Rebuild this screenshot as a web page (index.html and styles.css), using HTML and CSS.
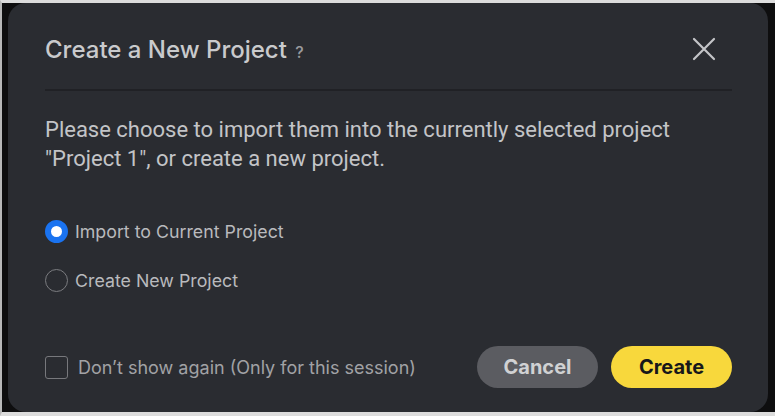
FILE: index.html
```html
<!DOCTYPE html>
<html>
<head>
<meta charset="utf-8">
<link rel="stylesheet" href="styles.css">
</head>
<body>
<div class="screen">
  <div class="dialog">
    <div class="header">
      <h1 class="title">Create a New Project <span class="help">?</span></h1>
      <button class="close" aria-label="Close">
        <svg width="24" height="24" viewBox="0 0 24 24"><path d="M2 2 L22 22 M22 2 L2 22" stroke="#c4c5c8" stroke-width="2.2" stroke-linecap="round" fill="none"/></svg>
      </button>
    </div>
    <div class="divider"></div>
    <p class="desc">Please choose to import them into the currently selected project<br>"Project 1", or create a new project.</p>
    <div class="options">
      <label class="option"><span class="radio checked"></span><span class="opt-text">Import to Current Project</span></label>
      <label class="option"><span class="radio"></span><span class="opt-text">Create New Project</span></label>
    </div>
    <div class="footer">
      <label class="check"><span class="box"></span><span class="check-text">Don’t show again (Only for this session)</span></label>
      <div class="buttons">
        <button class="btn cancel">Cancel</button>
        <button class="btn create">Create</button>
      </div>
    </div>
  </div>
</div>
</body>
</html>
```
FILE: styles.css
```css
html, body { margin: 0; padding: 0; }
body { background: #0f0f10; width: 775px; height: 416px; overflow: hidden; }
.screen {
  box-sizing: border-box;
  width: 775px; height: 416px;
  border-top: 3px solid #dcdcdc;
  border-bottom: 4px solid #dcdcdc;
  border-left: 2px solid #b8b8b8;
  background: #0e0e0f;
  padding: 0 7px 0 6px;
}
.dialog {
  box-sizing: border-box;
  height: 100%;
  background: #2a2c31;
  border-radius: 18px;
  padding: 30px 36px 0 37px;
  display: flex;
  flex-direction: column;
  font-family: "Roboto", "Liberation Sans", sans-serif;
}
.header { display: flex; justify-content: space-between; align-items: center; height: 32px; }
.title {
  margin: 0;
  font-family: "Inter", "Liberation Sans", sans-serif;
  font-weight: 500;
  font-size: 24px;
  color: #c9cacc;
}
.help { font-size: 16px; color: #9a9b9e; margin-left: 2px; font-weight: 500; }
.close { background: none; border: 0; padding: 0; width: 24px; height: 24px; margin-right: 16px; display: flex; }
.divider { height: 2px; background: #202125; margin-top: 24px; }
.desc {
  margin: 24px 0 0 0;
  font-size: 22px;
  line-height: 29px;
  color: #c3c4c7;
}
.options { margin-top: 47px; display: flex; flex-direction: column; gap: 26px; }
.option { display: flex; align-items: center; gap: 7px; height: 23px; }
.radio {
  box-sizing: border-box;
  width: 23px; height: 23px; border-radius: 50%;
  border: 1.5px solid #7b7c80;
}
.radio.checked { border: 6px solid #1a73f0; background: #ffffff; }
.opt-text { font-family: "Inter", "Liberation Sans", sans-serif; font-size: 17.8px; color: #b9babd; }
.footer { margin-top: auto; margin-bottom: 24px; display: flex; align-items: center; justify-content: space-between; }
.check { display: flex; align-items: center; gap: 10px; }
.box { box-sizing: border-box; width: 23px; height: 23px; border: 1.5px solid #77787c; border-radius: 3px; }
.check-text { font-family: "Inter", "Liberation Sans", sans-serif; font-size: 18px; color: #a1a2a5; }
.buttons { display: flex; gap: 13px; }
.btn {
  width: 121px; height: 42px; border: 0; border-radius: 21px;
  font-family: "Inter", "Liberation Sans", sans-serif;
  font-weight: 700; font-size: 20px;
}
.cancel { background: #5b5c61; color: #d0d1d3; }
.create { background: #f8d83c; color: #17171a; }
```
